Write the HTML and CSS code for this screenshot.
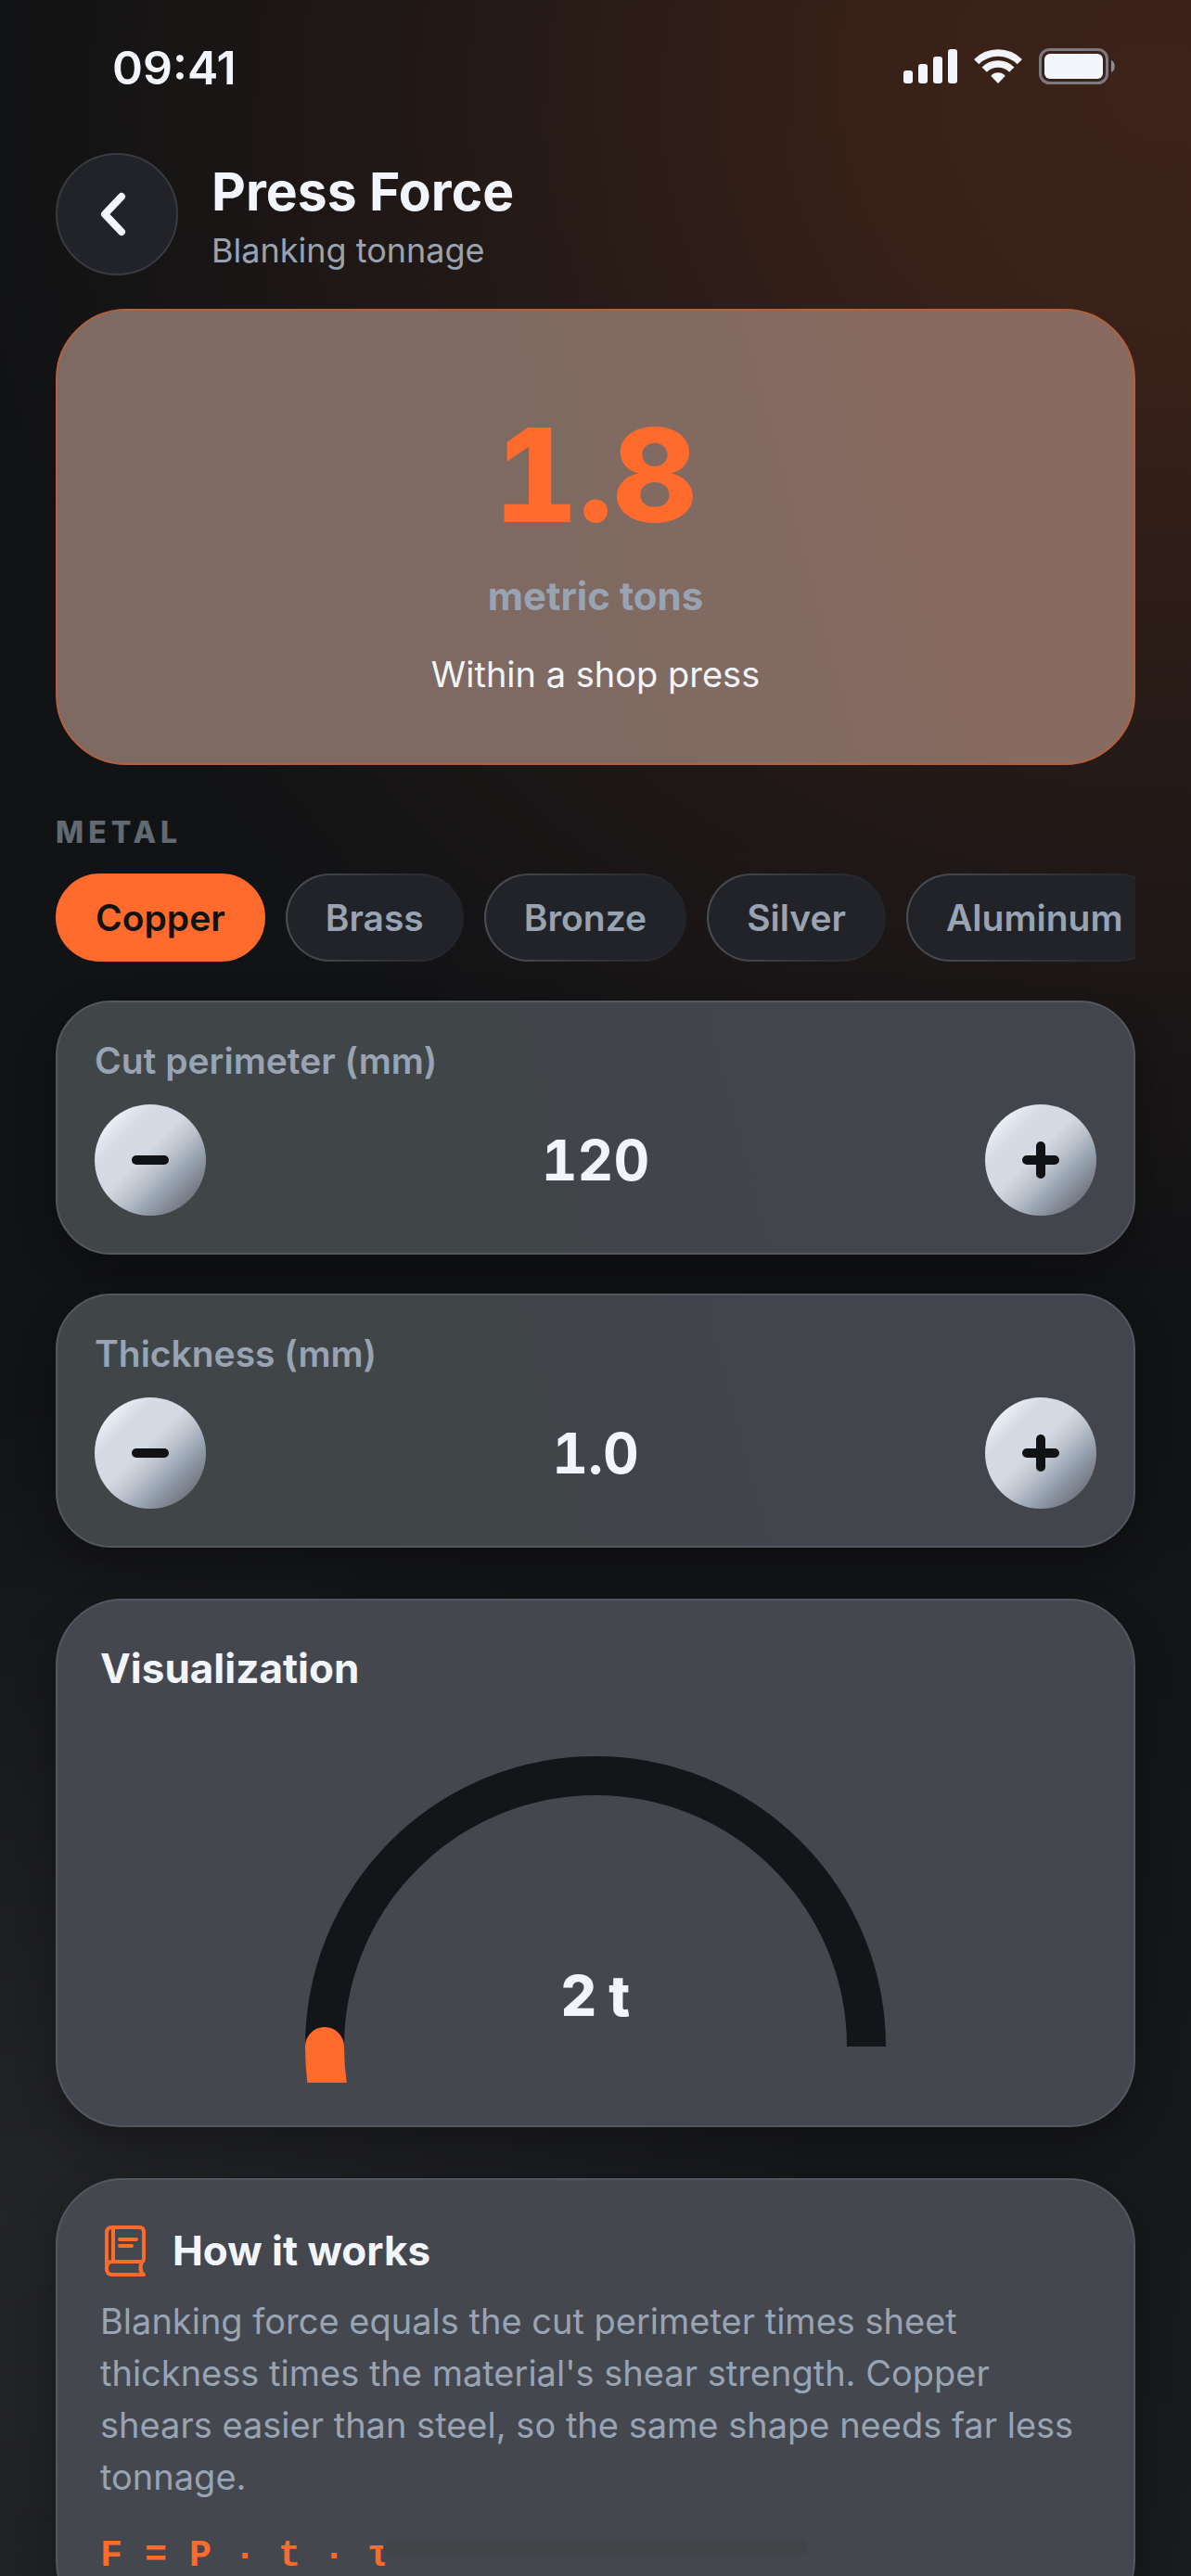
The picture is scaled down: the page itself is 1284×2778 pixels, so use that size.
FILE: index.html
```
<!DOCTYPE html>
<html lang="en">
<head>
    <meta charset="UTF-8">
    <meta name="viewport" content="width=device-width, initial-scale=1.0">
    <title>Press Force</title>
    <link rel="stylesheet" href="styles.css">
</head>
<body>
    <div class="status-bar">
        <span class="time">09:41</span>
        <div class="status-icons">
            <svg width="58" height="40" viewBox="0 0 58 40" fill="currentColor">
                <rect x="0" y="24" width="10" height="14" rx="3"/>
                <rect x="16" y="17" width="10" height="21" rx="3"/>
                <rect x="32" y="9" width="10" height="29" rx="3"/>
                <rect x="48" y="1" width="10" height="37" rx="3"/>
            </svg>
            <svg width="52" height="40" viewBox="0 0 52 40" fill="none" stroke="currentColor" stroke-width="7.5">
                <path d="M2.7 14.7a33 33 0 0 1 46.6 0"/>
                <path d="M11.2 23.2a21 21 0 0 1 29.6 0"/>
                <path d="M26 38l-7.2-7.4q-.8-1 .3-1.9a11.4 11.4 0 0 1 13.8 0q1.1.9.3 1.9z" fill="currentColor" stroke="none"/>
            </svg>
            <svg width="83" height="40" viewBox="0 0 83 40">
                <rect x="1.5" y="1.5" width="72" height="36" rx="10" fill="none" stroke="#7c7a80" stroke-width="3"/>
                <rect x="6" y="6" width="63" height="27" rx="6" fill="currentColor"/>
                <path d="M78 13c5 2 5 11 0 13z" fill="#8d8e95"/>
            </svg>
        </div>
    </div>

    <header class="header">
        <button class="back" aria-label="Back">
            <svg width="30" height="50" viewBox="0 0 30 50" fill="none" stroke="currentColor" stroke-width="8" stroke-linecap="round" stroke-linejoin="round">
                <path d="M24 6L6 25l18 19"/>
            </svg>
        </button>
        <div class="header-text">
            <h1>Press Force</h1>
            <p class="subtitle">Blanking tonnage</p>
        </div>
    </header>

    <main>
        <section class="result">
            <p class="result-value">1.8</p>
            <p class="result-unit">metric tons</p>
            <p class="result-note">Within a shop press</p>
        </section>

        <h2 class="section-label">METAL</h2>
        <div class="chips">
            <button class="chip active">Copper</button>
            <button class="chip">Brass</button>
            <button class="chip">Bronze</button>
            <button class="chip">Silver</button>
            <button class="chip">Aluminum</button>
        </div>

        <section class="card stepper">
            <label for="perimeter">Cut perimeter (mm)</label>
            <div class="stepper-row">
                <button class="round" aria-label="Decrease perimeter">
                    <svg width="40" height="40" viewBox="0 0 40 40"><path d="M5 20h30"/></svg>
                </button>
                <output id="perimeter">120</output>
                <button class="round" aria-label="Increase perimeter">
                    <svg width="40" height="40" viewBox="0 0 40 40"><path d="M5 20h30M20 5v30"/></svg>
                </button>
            </div>
        </section>

        <section class="card stepper">
            <label for="thickness">Thickness (mm)</label>
            <div class="stepper-row">
                <button class="round" aria-label="Decrease thickness">
                    <svg width="40" height="40" viewBox="0 0 40 40"><path d="M5 20h30"/></svg>
                </button>
                <output id="thickness">1.0</output>
                <button class="round" aria-label="Increase thickness">
                    <svg width="40" height="40" viewBox="0 0 40 40"><path d="M5 20h30M20 5v30"/></svg>
                </button>
            </div>
        </section>

        <section class="card visualization">
            <h2>Visualization</h2>
            <div class="gauge">
                <svg width="640" height="400" viewBox="0 0 640 400" fill="none" stroke-width="42">
                    <path d="M28 361a292 292 0 0 1 584 0" stroke="#141519"/>
                    <path d="M36 430Q28 396 28 361" stroke="#ff6b2c" stroke-linecap="round"/>
                </svg>
                <span class="gauge-value">2 t</span>
            </div>
        </section>

        <section class="card how">
            <div class="how-title">
                <svg width="54" height="60" viewBox="0 0 54 60" fill="none" stroke="#ff6b2c" stroke-width="4" stroke-linecap="round" stroke-linejoin="round">
                    <path d="M7 51V11q0-6 6-6h29q5 0 5 5v29q0 3-3 3H13q-6 0-6 7t6 7h34q-6-5-2-14"/>
                    <path d="M14 5v37"/>
                    <path d="M21 18h18M21 25h13"/>
                </svg>
                <h2>How it works</h2>
            </div>
            <p class="how-text">Blanking force equals the cut perimeter times sheet thickness times the material's shear strength. Copper shears easier than steel, so the same shape needs far less tonnage.</p>
            <p class="formula">F = P · t · τ</p>
        </section>
    </main>

    <div class="home-indicator"></div>
</body>
</html>
```
FILE: styles.css
```
:root {
    --text: #f2f5fb;
    --muted: #98a4b3;
    --accent: #ff6b2c;
    --dark: #111214;
    --card: #44474e;
    --card-border: #56575e;
}

* {
    box-sizing: border-box;
    margin: 0;
}

body {
    height: 100vh;
    overflow: hidden;
    padding: 0 60px;
    color: var(--text);
    font-family: Inter, "Liberation Sans", sans-serif;
    background:
        radial-gradient(circle at 98% 3%, rgba(255, 107, 44, 0.19) 0, rgba(255, 107, 44, 0.17) 300px, rgba(255, 107, 44, 0.08) 760px, transparent 1300px),
        radial-gradient(circle at 0 86%, rgba(255, 255, 255, 0.05), transparent 900px),
        linear-gradient(#101214 0, #121316 55%, #1a1b1e 100%);
}

button {
    border: none;
    padding: 0;
    font-family: inherit;
    cursor: pointer;
}

svg {
    display: block;
}

.status-bar {
    display: flex;
    justify-content: space-between;
    height: 142px;
    padding: 52px 21px 0 61px;
}

.time {
    font-size: 50px;
    font-weight: 600;
    line-height: 42px;
}

.status-icons {
    display: flex;
    gap: 18px;
}

.header {
    display: flex;
    align-items: center;
    gap: 36px;
    margin-top: 22px;
}

.back {
    display: flex;
    align-items: center;
    justify-content: center;
    width: 132px;
    height: 132px;
    padding-right: 8px;
    border: 2px solid #383b3f;
    border-radius: 50%;
    background: #222328;
    color: var(--text);
}

.header-text {
    padding-top: 8px;
}

h1 {
    font-size: 57px;
    font-weight: 700;
    line-height: 70px;
}

.subtitle {
    color: var(--muted);
    font-size: 36px;
    line-height: 56px;
}

.result {
    display: flex;
    flex-direction: column;
    align-items: center;
    margin-top: 35px;
    padding: 90px 48px 56px;
    border: 2px solid #b5603d;
    border-radius: 76px;
    background: linear-gradient(75deg, #7d6a63 0, #7f6a62 50%, #876a60 80%);
}

.result-value {
    color: var(--accent);
    font-size: 140px;
    font-weight: 800;
    line-height: 174px;
    font-variant-numeric: tabular-nums;
}

.result-unit {
    color: var(--muted);
    font-size: 42px;
    font-weight: 700;
    line-height: 88px;
}

.result-note {
    font-size: 38px;
    line-height: 80px;
}

.section-label {
    margin: 52px 0 23px;
    color: #616973;
    font-size: 32px;
    font-weight: 800;
    line-height: 42px;
    letter-spacing: 5px;
}

.chips {
    display: flex;
    gap: 22px;
    margin-bottom: 42px;
    overflow: hidden;
}

.chip {
    flex: none;
    height: 95px;
    padding: 0 41px;
    border: 2px solid transparent;
    border-radius: 48px;
    background:
        linear-gradient(#222328, #222328) padding-box,
        linear-gradient(90deg, #4b4f53, #303236 60%, #222328) border-box;
    color: var(--muted);
    font-size: 39px;
    font-weight: 600;
}

.chip.active {
    border-color: var(--accent);
    background: var(--accent);
    color: var(--dark);
}

.card {
    border: 2px solid var(--card-border);
    border-radius: 72px;
    background: var(--card);
    box-shadow: 0 16px 40px rgba(0, 0, 0, 0.3);
}

.card h2 {
    font-size: 44px;
    font-weight: 700;
    line-height: 54px;
}

.stepper {
    margin-bottom: 42px;
    padding: 40px;
    border-radius: 60px;
    background: linear-gradient(75deg, #404548 40%, #43454d 80%);
}

.stepper label {
    display: block;
    margin-bottom: 24px;
    color: var(--muted);
    font-size: 39px;
    font-weight: 600;
    line-height: 46px;
}

.stepper-row {
    display: flex;
    align-items: center;
    justify-content: space-between;
}

.stepper output {
    font-size: 60px;
    font-weight: 700;
    font-variant-numeric: tabular-nums;
}

.round {
    display: flex;
    align-items: center;
    justify-content: center;
    width: 120px;
    height: 120px;
    border-radius: 50%;
    background: linear-gradient(135deg, #f2f5fb 10%, #d5dbe4 27%, #d3dae4 45%, #b9c0ca 58%, #9aa6b4 68%, #6e717b 88%);
}

.round svg {
    fill: none;
    stroke: var(--dark);
    stroke-width: 10;
    stroke-linecap: round;
}

.visualization {
    margin-top: 55px;
    padding: 46px;
}

.gauge {
    position: relative;
    display: flex;
    justify-content: center;
    margin-top: 20px;
}

/* reading sits inside the arc */
.gauge-value {
    position: absolute;
    bottom: 58px;
    font-size: 60px;
    font-weight: 800;
    line-height: 72px;
}

.how {
    margin-top: 55px;
    padding: 46px;
}

.how-title {
    display: flex;
    align-items: center;
    gap: 24px;
    margin-bottom: 18px;
}

.how-text {
    color: var(--muted);
    font-size: 38px;
    line-height: 56px;
}

.formula {
    margin-top: 30px;
    color: var(--accent);
    font-family: "Liberation Mono", monospace;
    font-size: 40px;
    font-weight: 700;
    line-height: 56px;
}

.home-indicator {
    position: fixed;
    bottom: 23px;
    left: 50%;
    width: 458px;
    height: 16px;
    margin-left: -229px;
    border-radius: 8px;
    background: #414547;
}
```
